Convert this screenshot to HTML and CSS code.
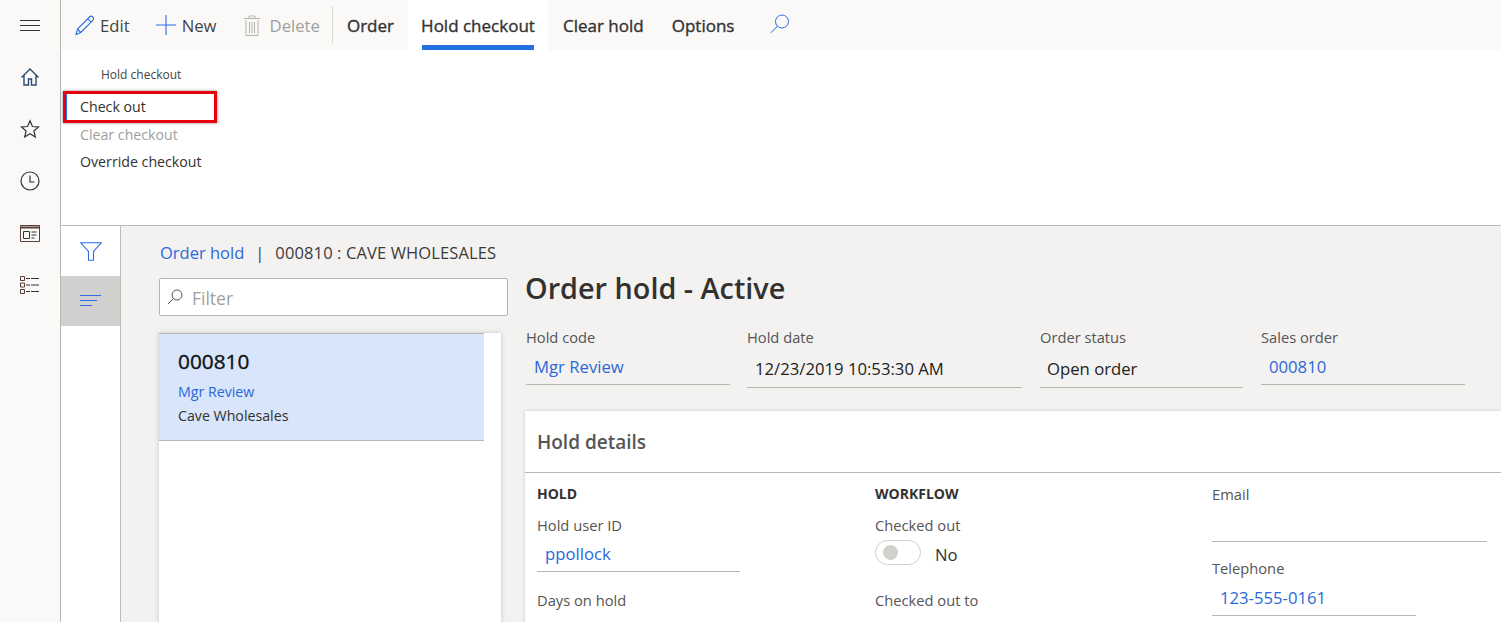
FILE: index.html
```html
<!DOCTYPE html>
<html lang="en">
<head>
<meta charset="utf-8">
<title>Order hold</title>
<link rel="stylesheet" href="styles.css">
</head>
<body>
<div class="app">
  <nav class="rail">
    <svg class="rail-icon menu-icon" width="20" height="12" viewBox="0 0 20 12"><path d="M0 .5h20M0 5.5h20M0 10.5h20" stroke="#333" fill="none"/></svg>
    <svg class="rail-icon" width="20" height="20" viewBox="0 0 20 20"><path d="M1.5 10.5 10 2l8.500 8.500M4 8.500v9.500h4.500v-6h3v6H16V8.500" stroke="#2b4a70" stroke-width="1.400" fill="none"/></svg>
    <svg class="rail-icon" width="20" height="20" viewBox="0 0 20 20"><path d="m10 1.800 2.400 5.700 6.100.5-4.600 4 1.400 6L10 14.800 4.700 18l1.400-6-4.600-4 6.100-.5z" stroke="#333" stroke-width="1.200" fill="none"/></svg>
    <svg class="rail-icon" width="20" height="20" viewBox="0 0 20 20"><circle cx="10" cy="10" r="9" stroke="#333" stroke-width="1.200" fill="none"/><path d="M10 4.500V11h4.500" stroke="#333" stroke-width="1.200" fill="none"/></svg>
    <svg class="rail-icon" width="20" height="17" viewBox="0 0 20 17"><path d="M.5.500h19v16H.5z" stroke="#5a4038" fill="none"/><path d="M0 2.500h20" stroke="#5a4038" stroke-width="2"/><path d="M3.500 6.500h6v7h-6zM11.500 7h5M11.500 10h5M11.500 13h3" stroke="#333" fill="none"/></svg>
    <svg class="rail-icon" width="20" height="18" viewBox="0 0 20 18"><path d="M.5 .5h4v4h-4zM.5 7h4v4h-4zM.5 13.500h4v4h-4z" stroke="#5a4038" fill="none"/><path d="M6 2.500h4M11 2.500h8M6 9h4M11 9h8M6 15.500h4M11 15.500h8" stroke="#333" fill="none"/></svg>
  </nav>
  <div class="main">
    <header class="toolbar">
      <button class="tool tool-edit">
        <svg width="20" height="21" viewBox="0 0 20 21"><path d="m1 19.500 1.500-5.500L14.500 2c1-1 2.300-1 3.300 0s1 2.300 0 3.300L5.800 17.500zM2.500 14l3.300 3.500M12.800 3.800l3.500 3.400" stroke="#2b6fe0" stroke-width="1.100" fill="none"/></svg>
        <span>Edit</span>
      </button>
      <button class="tool tool-new">
        <svg width="20" height="20" viewBox="0 0 20 20"><path d="M10 0v20M0 10h20" stroke="#2b6fe0" stroke-width="1.100"/></svg>
        <span>New</span>
      </button>
      <button class="tool tool-delete">
        <svg width="16" height="21" viewBox="0 0 16 21"><path d="M2 5v15.500h12V5M0 3.500h16M5 3.500V1h6v2.500M5.500 7v11M8 7v11M10.500 7v11" stroke="#b5b3ae" fill="none"/></svg>
        <span>Delete</span>
      </button>
      <span class="divider"></span>
      <button class="tab tab-order">Order</button>
      <button class="tab tab-active">Hold checkout</button>
      <button class="tab tab-clear">Clear hold</button>
      <button class="tab tab-options">Options</button>
      <svg class="search-icon" width="20" height="20" viewBox="0 0 20 20"><circle cx="12" cy="7.500" r="6.500" stroke="#2b6fe0" fill="none"/><path d="M7.500 12 1 18.800" stroke="#2b6fe0" fill="none"/></svg>
    </header>
    <section class="ribbon">
      <div class="group-title">Hold checkout</div>
      <div class="menu-item menu-focus"><span>Check out</span></div>
      <div class="menu-item menu-disabled"><span>Clear checkout</span></div>
      <div class="menu-item"><span>Override checkout</span></div>
    </section>
    <div class="body-row">
      <aside class="side-tabs">
        <div class="side-tab">
          <svg width="22" height="19" viewBox="0 0 22 19"><path d="M.8.800h20.400L13.500 9.500v8.700h-5V9.500z" stroke="#2b6fe0" stroke-width="1.100" fill="none"/></svg>
        </div>
        <div class="side-tab side-tab-on">
          <svg width="21" height="12" viewBox="0 0 21 12"><path d="M0 .5h21M0 5.500h17M0 10.500h12" stroke="#2b6fe0" fill="none"/></svg>
        </div>
      </aside>
      <main class="content">
        <div class="crumbs"><a class="link">Order hold</a><span class="sep">|</span><span class="crumb-title">000810 : CAVE WHOLESALES</span></div>
        <div class="split">
          <div class="list-col">
            <div class="filter">
              <svg width="16" height="16" viewBox="0 0 16 16"><circle cx="10" cy="6" r="5" stroke="#555" fill="none"/><path d="M6.500 9.500 1 15" stroke="#555" fill="none"/></svg>
              <span class="filter-text">Filter</span>
            </div>
            <div class="list">
              <div class="list-row">
                <div class="row-id">000810</div>
                <div class="row-link">Mgr Review</div>
                <div class="row-name">Cave Wholesales</div>
              </div>
            </div>
          </div>
          <div class="detail">
            <h1>Order hold - Active</h1>
            <div class="summary">
              <div class="field f-code"><label>Hold code</label><div class="value link">Mgr Review</div></div>
              <div class="field f-date"><label>Hold date</label><div class="value dark tall">12/23/2019 10:53:30 AM</div></div>
              <div class="field f-status"><label>Order status</label><div class="value dark tall">Open order</div></div>
              <div class="field f-so"><label>Sales order</label><div class="value link">000810</div></div>
            </div>
            <section class="card">
              <h2>Hold details</h2>
              <div class="columns">
                <div class="col col-a">
                  <h3>HOLD</h3>
                  <div class="field"><label>Hold user ID</label><div class="value link">ppollock</div></div>
                  <label class="next">Days on hold</label>
                </div>
                <div class="col col-b">
                  <h3>WORKFLOW</h3>
                  <label>Checked out</label>
                  <div class="toggle-row"><span class="toggle"><i></i></span><span class="toggle-text">No</span></div>
                  <label class="next-b">Checked out to</label>
                </div>
                <div class="col col-c">
                  <div class="field f-email"><label>Email</label><div class="value empty"></div></div>
                  <div class="field f-phone"><label>Telephone</label><div class="value link">123-555-0161</div></div>
                </div>
              </div>
            </section>
          </div>
        </div>
      </main>
    </div>
  </div>
</div>
</body>
</html>
```
FILE: styles.css
```css
* { box-sizing: border-box; }
html, body { margin: 0; height: 100%; overflow: hidden; }
body { font-family: "Open Sans", "Noto Sans", sans-serif; color: #323130; background: #fff; }
.app { display: flex; height: 622px; }
.rail { width: 61px; flex: none; background: #faf9f8; border-right: 1px solid #b8b6b3; display: flex; flex-direction: column; align-items: center; padding-top: 20px; }
.rail-icon { display: block; margin-right: 1px; margin-bottom: 32px; }
.rail-icon.menu-icon { margin-bottom: 35px; }
.rail-icon:nth-child(4) { margin-bottom: 34px; }
.rail-icon:nth-child(5) { margin-bottom: 34px; }
.main { flex: 1; min-width: 0; display: flex; flex-direction: column; }
.toolbar { height: 50px; flex: none; background: #faf9f8; display: flex; align-items: stretch; padding-left: 14px; }
button { font: inherit; letter-spacing: inherit; background: none; border: 0; padding: 0; color: inherit; }
.tool { display: flex; align-items: center; gap: 6px; font-size: 16.700px; color: #444; height: 50px; }
.tool-edit { gap: 5px; }
.tool-new { margin-left: 26px; }
.tool-delete { margin-left: 27px; gap: 10px; color: #a19f9d; }
.divider { width: 1px; height: 38px; background: #dcdad7; margin: 6px 0 0 12px; }
.tab { font-size: 17px; color: #323130; -webkit-text-stroke: .35px #323130; height: 50px; position: relative; }
.tab-order { margin-left: 14px; }
.tab-active { margin-left: 14px; width: 140px; background: #fff; }
.tab-active::after { content: ""; position: absolute; left: 14px; right: 14px; bottom: 0; height: 5px; background: #2370e0; }
.tab-clear { margin-left: 15px; }
.tab-options { margin-left: 28px; }
.search-icon { align-self: center; margin-left: 36px; margin-top: -2px; }
.ribbon { height: 176px; flex: none; background: #fff; border-bottom: 1px solid #bdbbb8; padding: 16px 0 0 2px; font-size: 14.200px; }
.group-title { font-size: 12px; padding-left: 38px; height: 25px; line-height: 18px; color: #444; }
.menu-item { width: 154px; height: 27px; line-height: 25px; padding-left: 17px; color: #323130; }
.menu-focus { height: 32px; border: 3px solid #e8000b; box-shadow: 0 0 3px #888; line-height: 26px; padding-left: 14px; position: relative; margin-bottom: -1px; }
.menu-focus::before { content: ""; position: absolute; left: 0; top: 0; bottom: 0; width: 1px; background: #2370e0; }
.menu-disabled { color: #a19f9d; }
.body-row { flex: 1; min-height: 0; display: flex; }
.side-tabs { width: 60px; flex: none; background: #fff; border-right: 1px solid #bdbbb8; }
.side-tab { height: 50px; display: flex; align-items: center; justify-content: center; }
.side-tab-on { background: #d2d0ce; }
.content { flex: 1; min-width: 0; background: #f3f2f1; padding: 16px 0 0 38px; overflow: hidden; }
.link { color: #2b68d9; }
.crumbs { font-size: 16.500px; height: 22px; line-height: 22px; padding-left: 1px; color: #3a3a3a; }
.sep { margin: 0 11px; color: #2b3a55; }
.crumb-title { letter-spacing: .12px; }
.split { display: flex; margin-top: 14px; }
.list-col { width: 349px; flex: none; }
.filter { height: 38px; background: #fff; border: 1px solid #b8b6b3; border-radius: 2px; display: flex; align-items: center; gap: 9px; padding-left: 7px; font-size: 17.500px; color: #a19f9d; }
.filter-text { margin-top: 2px; }
.list { width: 342px; height: 320px; background: #fff; margin-top: 17px; box-shadow: 0 0 5px rgba(0,0,0,.18); }
.list-row { width: 325px; height: 108px; background: #d8e5fb; border-top: 1px solid #b8b6b3; border-bottom: 1px solid #b8b6b3; padding: 14px 0 0 19px; }
.row-id { font-size: 20.800px; line-height: 27px; color: #111; -webkit-text-stroke: .35px #111; }
.row-link { font-size: 14.200px; line-height: 24px; margin-top: 5px; color: #2b68d9; }
.row-name { font-size: 14.200px; line-height: 24px; color: #323130; }
.detail { flex: 1; min-width: 0; margin-left: 17px; }
h1 { font-size: 28.800px; font-weight: 600; line-height: 36px; margin: -8px 0 0; color: #323130; }
.summary { display: flex; margin-top: 21px; padding-left: 1px; }
.field label, label { display: block; font-size: 14.700px; line-height: 20px; color: #555; }
.summary label { line-height: 21px; }
.f-code { width: 221px; }
.f-date { width: 293px; }
.f-status { width: 221px; }
.f-so { width: 204px; }
.f-code .value { width: 204px; }
.value { font-size: 16.700px; height: 37px; line-height: 37px; padding-left: 8px; border-bottom: 1px solid #b8b6b3; }
.value.dark { color: #222; }
.summary .tall { height: 40px; line-height: 42px; }
.f-date .value { width: 275px; }
.f-status .value { width: 203px; padding-left: 7px; }
.card { margin-top: 23px; background: #fff; box-shadow: 0 0 4px rgba(0,0,0,.15); height: 300px; }
h2 { margin: 0; height: 62px; line-height: 62px; padding-left: 12px; font-size: 19px; font-weight: 600; color: #555; border-bottom: 1px solid #b8b6b3; }
.columns { display: grid; grid-template-columns: 338px 337px 1fr; padding: 10px 14px 0 12px; }
h3 { margin: 0; font-size: 14px; line-height: 22px; font-weight: 700; color: #323130; }
.col-a .field { margin-top: 10px; width: 203px; }
.next { margin-top: 18px; }
.col-b > label { margin-top: 10px; }
.toggle-row { display: flex; align-items: center; gap: 14px; height: 28px; font-size: 16.700px; margin-top: 3px; }
.toggle-text { margin-top: 4px; }
.toggle { width: 46px; height: 25px; background: #fff; border: 1px solid #d1d0cc; border-radius: 13px; display: flex; align-items: center; padding-left: 7px; }
.toggle i { width: 15px; height: 15px; background: #d1d0cc; border-radius: 50%; }
.col-b > .next-b { margin-top: 24px; }
.f-email { margin-top: 1px; }
.col-c .value.empty { height: 38px; }
.f-phone { margin-top: 16px; width: 204px; }
.f-phone .value { height: 38px; line-height: 39px; }
```
